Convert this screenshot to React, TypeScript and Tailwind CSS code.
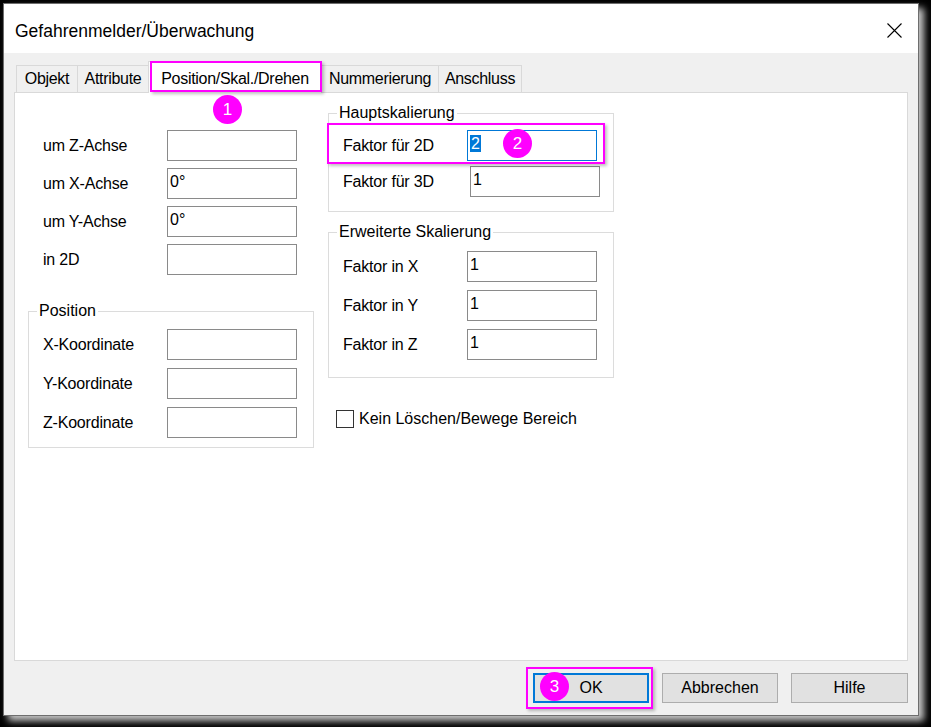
import type { ReactNode } from 'react'
import clsx from 'clsx'

const FONT = "font-['Liberation_Sans',Arial,sans-serif]"

type FieldProps = {
  value?: string
  focused?: boolean
  selected?: boolean
  className?: string
}

const Field = ({ value, focused, selected, className }: FieldProps) => (
  <div
    className={clsx(
      'w-[130px] h-[31px] bg-white border pl-[2px] pt-[3px] text-[16px] leading-[19px]',
      focused ? 'border-[#0078d7]' : 'border-[#8a8a8a]',
      className,
    )}
  >
    {value &&
      (selected ? (
        <span className="bg-[#0078d7] text-white px-[1px]">{value}</span>
      ) : (
        <span>{value}</span>
      ))}
  </div>
)

const Row = ({ label, children }: { label: string; children: ReactNode }) => (
  <div className="flex items-center h-[31px]">
    <span className="w-[124px] text-[16px] leading-[18px] tracking-[-0.2px]">{label}</span>
    {children}
  </div>
)

const GroupBox = ({
  title,
  className,
  children,
}: {
  title: string
  className?: string
  children: ReactNode
}) => (
  <fieldset className={clsx('border border-[#dcdcdc] pl-[14px]', className)}>
    <legend className="-ml-[6px] px-[2px] text-[16px] leading-[18px]">
      {title}
    </legend>
    {children}
  </fieldset>
)

const Badge = ({ n, className }: { n: number; className: string }) => (
  <div
    className={clsx(
      'absolute z-20 w-[29px] h-[29px] rounded-full bg-[#ff00ff] text-white text-[17px] flex items-center justify-center',
      className,
    )}
  >
    {n}
  </div>
)

const Marker = ({ className }: { className: string }) => (
  <div
    className={clsx(
      'absolute z-20 border-2 border-[#ff00ff] shadow-[2px_2px_3px_rgba(0,0,0,0.25)]',
      className,
    )}
  />
)

export default function App() {
  const tabBase =
    'h-[27px] flex items-center justify-center border-t border-[#d9d9d9] bg-[#f0f0f0] text-[16px] tracking-[-0.3px]'

  return (
    <div
      className={clsx(
        'relative w-[931px] h-[727px] bg-black overflow-hidden text-black',
        FONT,
      )}
    >
      <div className="pt-[3px] pl-[3px]">
        <div className="w-[916px] h-[713px] border border-[#6e6e6e] bg-[#f0f0f0] flex flex-col shadow-[5px_5px_7px_rgba(220,220,220,0.9)]">
          {/* title bar */}
          <div className="h-[49px] shrink-0 bg-white flex items-center justify-between pl-[11px] pr-[16px] pt-[6px]">
            <span className="text-[17.5px]">Gefahrenmelder/Überwachung</span>
            <svg width="15" height="15" viewBox="0 0 15 15" className="mb-[2px]">
              <path d="M0.5 0.5 L14.5 14.5 M14.5 0.5 L0.5 14.5" stroke="#000" strokeWidth="1.1" />
            </svg>
          </div>

          {/* tabs */}
          <div className="mt-[8px] ml-[12px] h-[31px] flex items-end shrink-0">
            <div className={clsx(tabBase, 'w-[61px] border-l')}>Objekt</div>
            <div className={clsx(tabBase, 'w-[71px] border-l')}>Attribute</div>
            <div className="relative z-10 -mb-px w-[174px] h-[32px] pt-[2px] flex items-center justify-center border-t border-l border-r border-[#d9d9d9] bg-white text-[16px] tracking-[-0.3px]">
              Position/Skal./Drehen
            </div>
            <div className={clsx(tabBase, 'w-[117px] border-r')}>Nummerierung</div>
            <div className={clsx(tabBase, 'w-[83px] border-r')}>Anschluss</div>
          </div>

          {/* tab panel */}
          <div className="mx-[10px] h-[569px] shrink-0 border border-[#d9d9d9] bg-white flex">
            <div className="ml-[13px] w-[286px] flex flex-col">
              <div className="mt-[37px] pl-[15px] flex flex-col gap-[7px]">
                <Row label="um Z-Achse">
                  <Field />
                </Row>
                <Row label="um X-Achse">
                  <Field value="0°" />
                </Row>
                <Row label="um Y-Achse">
                  <Field value="0°" />
                </Row>
                <Row label="in 2D">
                  <Field />
                </Row>
              </div>

              <GroupBox title="Position" className="mt-[27px] pb-[9px]">
                <div className="mt-[9px] flex flex-col gap-[8px]">
                  <Row label="X-Koordinate">
                    <Field />
                  </Row>
                  <Row label="Y-Koordinate">
                    <Field />
                  </Row>
                  <Row label="Z-Koordinate">
                    <Field />
                  </Row>
                </div>
              </GroupBox>
            </div>

            <div className="ml-[14px] w-[286px] flex flex-col">
              <GroupBox title="Hauptskalierung" className="mt-[11px] pb-[14px]">
                <div className="mt-[8px] flex flex-col gap-[5px]">
                  <Row label="Faktor für 2D">
                    <Field value="2" focused selected />
                  </Row>
                  <Row label="Faktor für 3D">
                    <Field value="1" className="ml-[3px]" />
                  </Row>
                </div>
              </GroupBox>

              <GroupBox title="Erweiterte Skalierung" className="mt-[11px] pb-[17px]">
                <div className="mt-[10px] flex flex-col gap-[8px]">
                  <Row label="Faktor in X">
                    <Field value="1" />
                  </Row>
                  <Row label="Faktor in Y">
                    <Field value="1" />
                  </Row>
                  <Row label="Faktor in Z">
                    <Field value="1" />
                  </Row>
                </div>
              </GroupBox>

              <label className="mt-[29px] ml-[8px] flex items-center gap-[5px] text-[16px]">
                <span className="w-[18px] h-[18px] border border-[#333] bg-white" />
                <span>Kein Löschen/Bewege Bereich</span>
              </label>
            </div>
          </div>

          {/* buttons */}
          <div className="mt-[12px] pr-[10px] flex justify-end gap-[13px]">
            <button className="w-[116px] h-[30px] border-2 border-[#0078d7] bg-[#e1e1e1] text-[16px]">
              OK
            </button>
            <button className="w-[116px] h-[30px] border border-[#adadad] bg-[#e1e1e1] text-[16px]">
              Abbrechen
            </button>
            <button className="w-[117px] h-[30px] border border-[#adadad] bg-[#e1e1e1] text-[16px]">
              Hilfe
            </button>
          </div>
        </div>
      </div>

      {/* annotations */}
      <Marker className="left-[150px] top-[61px] w-[172px] h-[31px]" />
      <Badge n={1} className="left-[213px] top-[95px]" />
      <Marker className="left-[327px] top-[123px] w-[278px] h-[41px]" />
      <Badge n={2} className="left-[503px] top-[129px]" />
      <Marker className="left-[526px] top-[667px] w-[127px] h-[42px]" />
      <Badge n={3} className="left-[540px] top-[672px]" />
    </div>
  )
}
